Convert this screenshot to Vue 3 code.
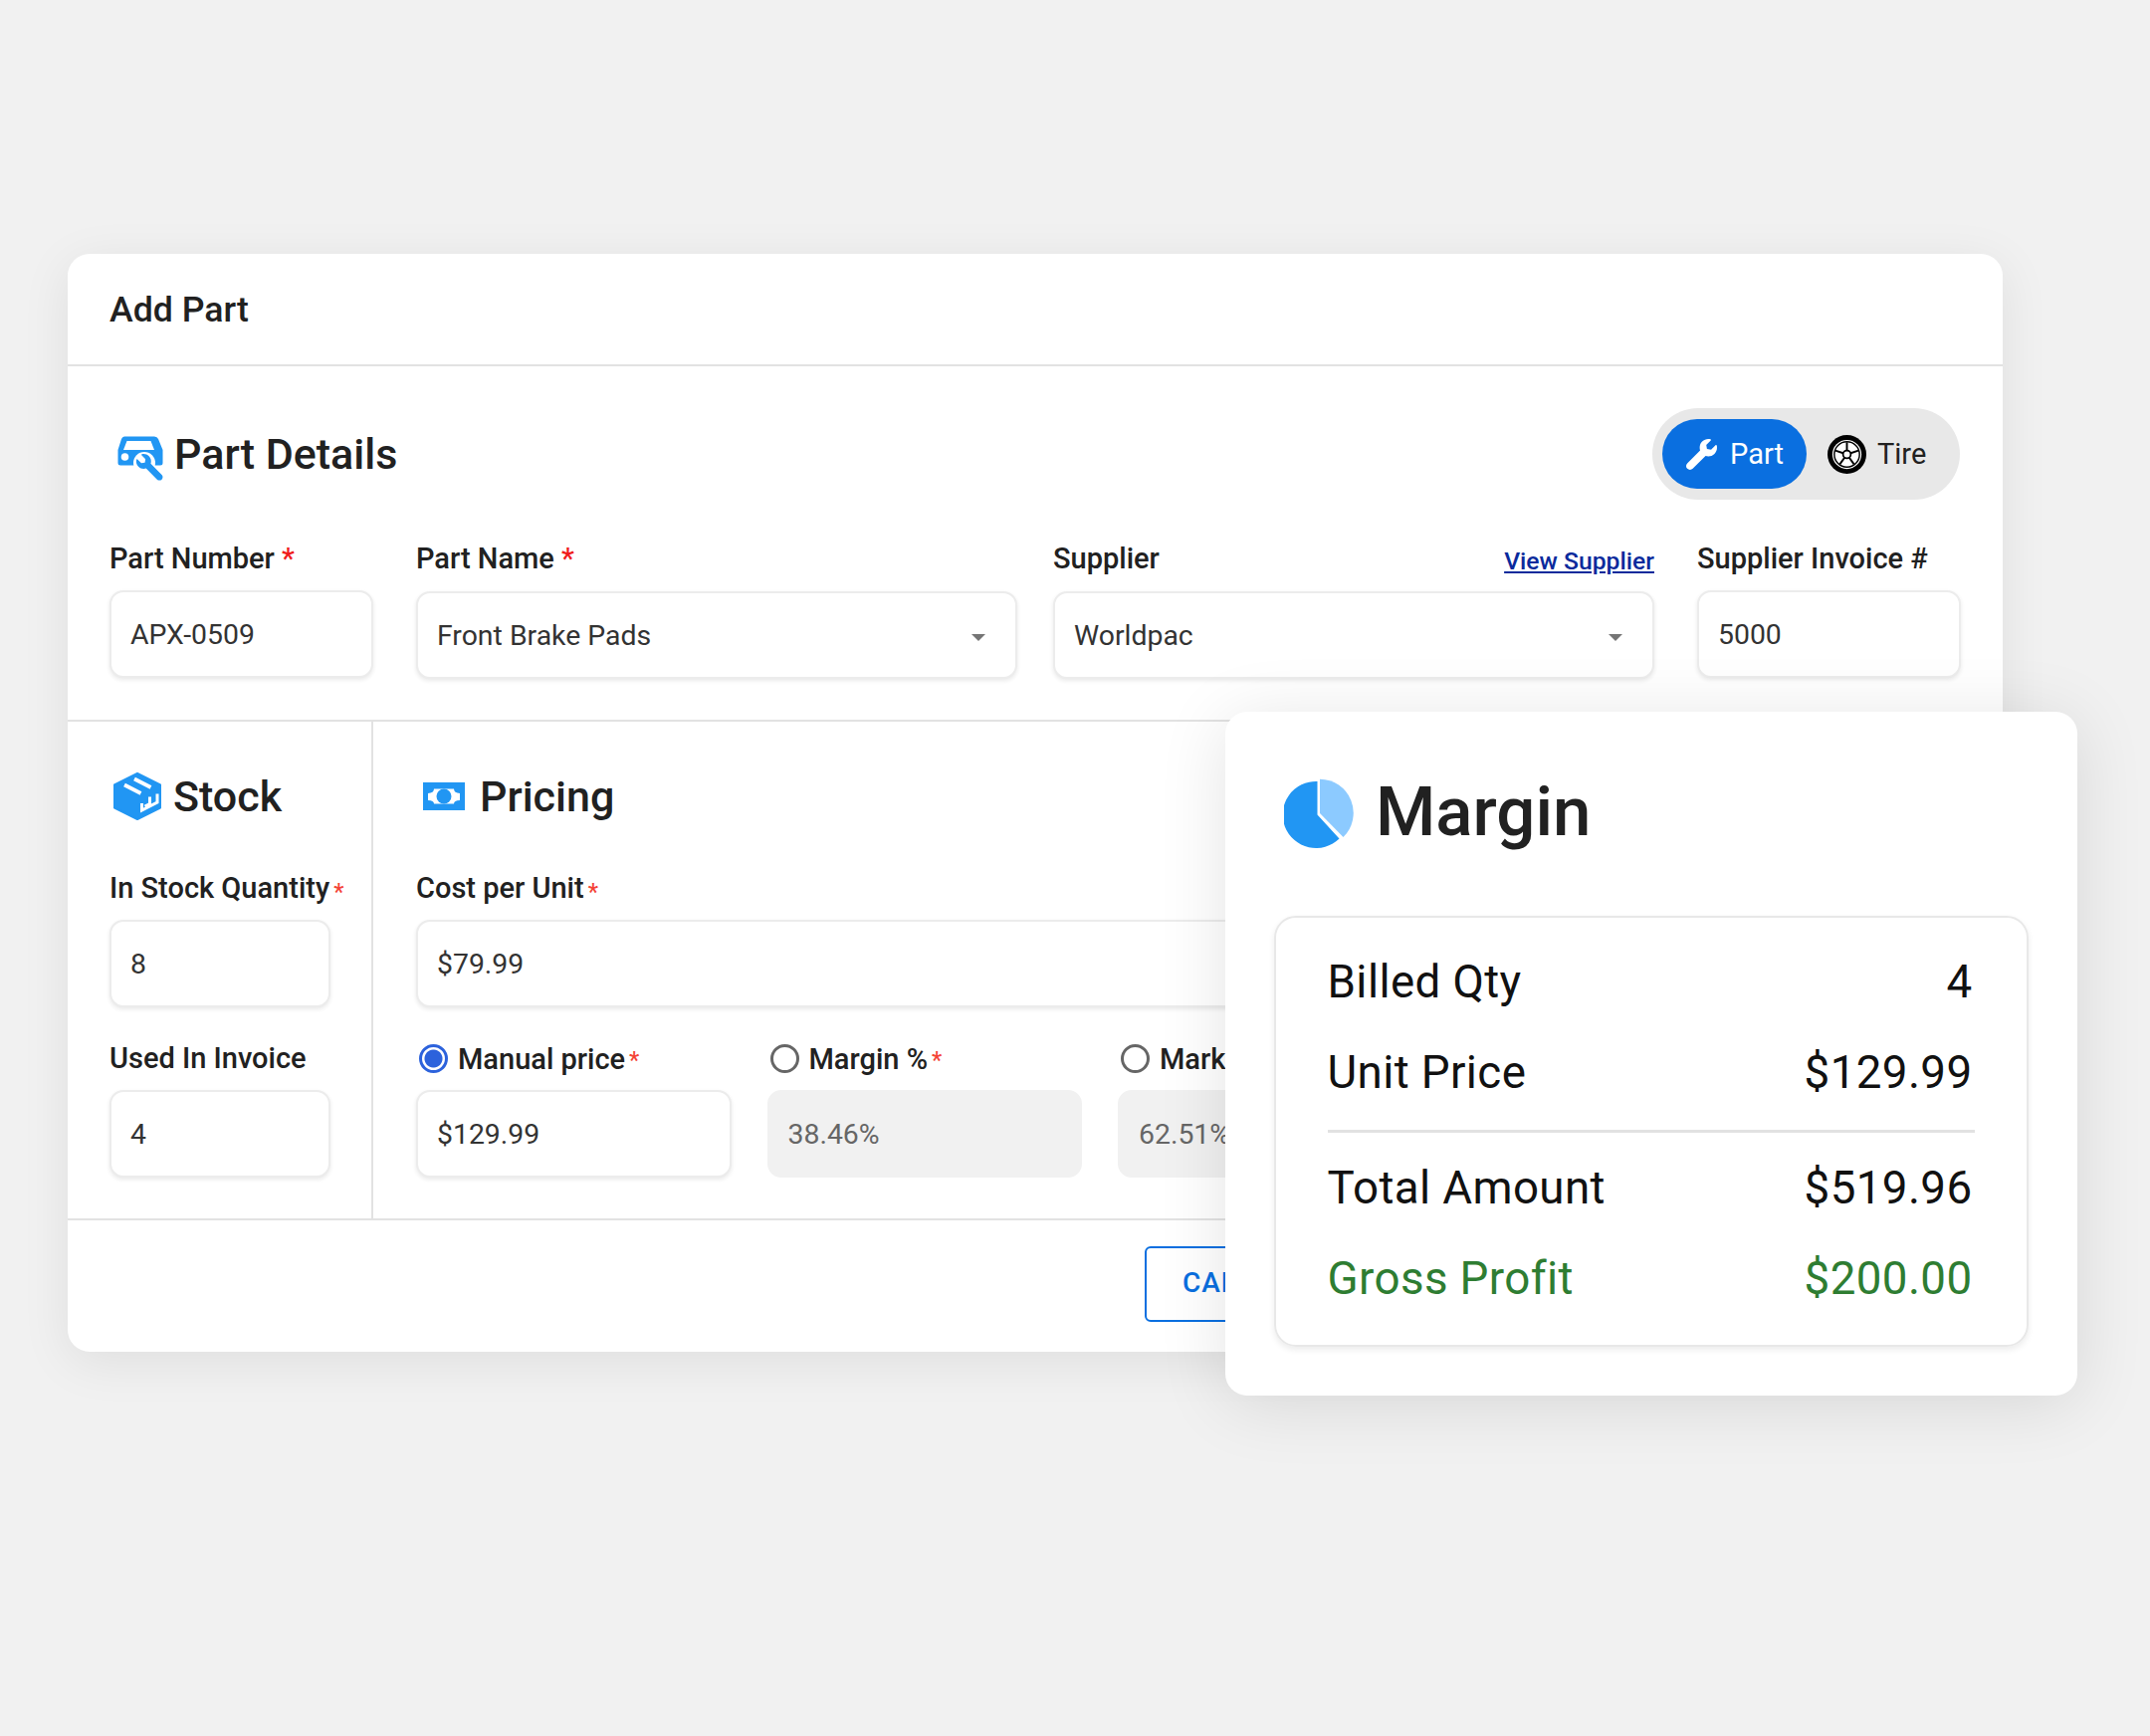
<script setup>
const rows = [
  { label: 'Billed Qty', value: '4' },
  { label: 'Unit Price', value: '$129.99' },
]
const totals = [
  { label: 'Total Amount', value: '$519.96' },
  { label: 'Gross Profit', value: '$200.00', good: true },
]
const radios = [
  { label: 'Manual price', value: '$129.99', checked: true },
  { label: 'Margin %', value: '38.46%' },
  { label: 'Markup %', value: '62.51%' },
]
</script>

<template>
  <div class="stage">
    <section class="card">
      <header class="card-head">Add Part</header>

      <div class="details">
        <div class="details-top">
          <h2 class="heading">
            <svg class="ic-car" viewBox="0 0 48 45">
              <path fill="#2196f3" d="M8 .5H38Q41 .5 42 3L46.500 14V27Q46.500 29.500 44 29.500H4Q1.500 29.500 1.500 27V14L5 3Q6 .5 8 .5Z" />
              <path fill="#fff" d="M10.500 5H34.500L38 14H7Z" />
              <circle cx="8.500" cy="21" r="3.800" fill="#fff" />
              <circle cx="28" cy="27" r="11" fill="#fff" />
              <path fill="#2196f3" transform="translate(46.500 18) scale(-.052 .052)" d="M507.730 109.100c-2.240-9.030-13.540-12.090-20.120-5.510l-74.360 74.360-67.880-11.310-11.310-67.880 74.360-74.360c6.620-6.620 3.430-17.900-5.660-20.160-47.380-11.740-99.550.91-136.580 37.930-39.640 39.640-50.550 97.100-34.050 147.200L18.740 402.760c-24.990 24.990-24.990 65.510 0 90.500 24.990 24.990 65.510 24.990 90.500 0l213.210-213.210c50.120 16.710 107.470 5.680 147.370-34.220 37.070-37.070 49.700-89.320 37.910-136.730z" />
            </svg>
            Part Details
          </h2>
          <div class="toggle">
            <div class="toggle-on">
              <svg class="ic-wrench" viewBox="0 0 512 512">
                <path fill="#fff" d="M507.730 109.100c-2.240-9.030-13.540-12.090-20.120-5.510l-74.360 74.360-67.880-11.310-11.310-67.880 74.360-74.360c6.620-6.620 3.430-17.900-5.660-20.160-47.380-11.740-99.550.91-136.580 37.930-39.640 39.640-50.550 97.100-34.050 147.200L18.740 402.760c-24.990 24.990-24.990 65.510 0 90.500 24.990 24.990 65.510 24.990 90.500 0l213.210-213.210c50.120 16.710 107.470 5.680 147.370-34.220 37.070-37.070 49.700-89.320 37.910-136.730z" />
              </svg>
              Part
            </div>
            <div class="toggle-off">
              <svg class="ic-tire" viewBox="0 0 40 40">
                <circle cx="20" cy="20" r="20" fill="#000" />
                <circle cx="20" cy="20" r="15" fill="#fff" />
                <circle cx="20" cy="20" r="13" fill="none" stroke="#000" stroke-width="1.500" />
                <g stroke="#000" stroke-width="2">
                  <path d="M20 20V7.500" />
                  <path d="M20 20L31.900 16.100" />
                  <path d="M20 20L27.300 30.100" />
                  <path d="M20 20L12.700 30.100" />
                  <path d="M20 20L8.100 16.100" />
                </g>
                <circle cx="20" cy="20" r="4" fill="#fff" stroke="#000" stroke-width="1.800" />
              </svg>
              Tire
            </div>
          </div>
        </div>

        <div class="details-row">
          <div class="field narrow">
            <label class="label">Part Number <em class="req">*</em></label>
            <div class="input">APX-0509</div>
          </div>
          <div class="pair">
            <div class="field wide">
              <label class="label">Part Name <em class="req">*</em></label>
              <div class="input select">Front Brake Pads<i class="caret"></i></div>
            </div>
            <div class="field wide">
              <div class="label label-split"><span>Supplier</span><a class="link">View Supplier</a></div>
              <div class="input select">Worldpac<i class="caret"></i></div>
            </div>
          </div>
          <div class="field narrow">
            <label class="label">Supplier Invoice #</label>
            <div class="input">5000</div>
          </div>
        </div>
      </div>

      <div class="split">
        <div class="stock">
          <h2 class="heading sub">
            <svg class="ic-box" viewBox="0 0 48 48">
              <path fill="#2196f3" stroke="#2196f3" stroke-width="2" stroke-linejoin="round" d="M24 1L47 12.500V35.500L24 47L1 35.500V12.500Z" />
              <path fill="none" stroke="#fff" stroke-width="3.800" d="M11 12.500L27.500 21M21 6.500L37.500 15" />
              <path fill="none" stroke="#fff" stroke-width="3" d="M28.500 31V38L44 30V21.500M36.500 24.500V31.500L31.500 34" />
            </svg>
            Stock
          </h2>
          <div class="field">
            <label class="label">In Stock Quantity<em class="req small">*</em></label>
            <div class="input">8</div>
          </div>
          <div class="field next">
            <label class="label">Used In Invoice</label>
            <div class="input">4</div>
          </div>
        </div>

        <div class="pricing">
          <h2 class="heading sub">
            <svg class="ic-bill" viewBox="0 0 42 28">
              <rect width="42" height="28" fill="#2196f3" />
              <path fill="#fff" d="M11 6.500H31Q31 10.500 37 11V18Q31 18 31 21.500H11Q11 18 5 18V11Q11 10.500 11 6.500Z" />
              <circle cx="21" cy="14" r="7.500" fill="#2196f3" />
            </svg>
            Pricing
          </h2>
          <div class="field">
            <label class="label">Cost per Unit<em class="req small">*</em></label>
            <div class="input">$79.99</div>
          </div>
          <div class="radio-row next">
            <div v-for="r in radios" :key="r.label" class="field radio-field">
              <div class="radio-label">
                <span class="radio" :class="{ checked: r.checked }"></span>
                <span>{{ r.label }}</span><em class="req small">*</em>
              </div>
              <div class="input" :class="{ off: !r.checked }">{{ r.value }}</div>
            </div>
          </div>
        </div>
      </div>

      <footer class="foot">
        <button class="btn">CANCEL</button>
      </footer>
    </section>

    <aside class="margin">
      <h2 class="margin-head">
        <svg class="ic-pie" viewBox="0 0 70 70">
          <path fill="#2196f3" d="M33.500 3V36.500L55.500 60.500A33.500 33.500 0 1 1 33.500 3Z" />
          <path fill="#8ccaff" d="M36 .7V35L59.500 59A34 34 0 0 0 36 .7Z" />
        </svg>
        <span class="margin-title">Margin</span>
      </h2>
      <div class="sheet">
        <div v-for="r in rows" :key="r.label" class="line">
          <span>{{ r.label }}</span><span>{{ r.value }}</span>
        </div>
        <hr class="rule" />
        <div v-for="r in totals" :key="r.label" class="line" :class="{ good: r.good }">
          <span>{{ r.label }}</span><span>{{ r.value }}</span>
        </div>
      </div>
    </aside>
  </div>
</template>

<style scoped>
.stage {
  position: relative;
  height: 1744px;
  width: 2160px;
  overflow: hidden;
  padding: 255px 0 0 68px;
  box-sizing: border-box;
  background: #f1f1f1;
  font-family: Roboto, "Liberation Sans", sans-serif;
  color: #212121;
}
.card {
  width: 1944px;
  height: 1103px;
  background: #fff;
  border-radius: 22px;
  box-shadow: 0 10px 50px rgba(0, 0, 0, 0.08);
  display: flex;
  flex-direction: column;
}
.card-head {
  height: 110px;
  box-sizing: content-box;
  padding: 1px 0 0 42px;
  display: flex;
  align-items: center;
  font-size: 35.700px;
  font-weight: 500;
  border-bottom: 2px solid #e2e2e2;
}
.details {
  padding: 42px 42px 41px;
}
.details-top {
  display: flex;
  justify-content: space-between;
  align-items: center;
  height: 92px;
  margin-bottom: 38px;
  padding-right: 1px;
}
.heading {
  margin: 0;
  height: 60px;
  display: flex;
  align-items: center;
  gap: 10px;
  font-size: 43px;
  font-weight: 500;
  line-height: 1;
}
.heading.sub {
  margin-bottom: 41px;
  gap: 12px;
  padding-left: 4px;
}
.ic-car { width: 48px; height: 45px; margin: 8px 0 0 7px; flex: none; }
.ic-box { width: 48px; height: 48px; flex: none; }
.ic-bill { width: 42px; height: 28px; margin: 0 3px 0 3px; flex: none; }
.ic-pie { width: 70px; height: 70px; margin-left: 10px; flex: none; }
.ic-wrench { width: 31px; height: 31px; flex: none; }
.ic-tire { width: 39px; height: 39px; flex: none; }

.toggle {
  width: 309px;
  height: 92px;
  box-sizing: border-box;
  border-radius: 46px;
  background: #e8e8e8;
  padding: 11px 10px;
  display: flex;
  align-items: center;
  font-size: 29px;
}
.toggle-on {
  width: 145px;
  height: 70px;
  border-radius: 35px;
  background: #0a6fe0;
  color: #fff;
  display: flex;
  align-items: center;
  gap: 13px;
  padding-left: 24px;
  box-sizing: border-box;
}
.toggle-off {
  display: flex;
  align-items: center;
  gap: 11px;
  margin-left: 21px;
  color: #212121;
}

.details-row {
  display: flex;
  gap: 43px;
  align-items: flex-start;
}
.pair {
  display: flex;
  gap: 36px;
}
.pair .label { margin-bottom: 12px; }
.field.narrow { width: 265px; }
.field.wide { width: 604px; }
.label {
  display: block;
  height: 42px;
  line-height: 42px;
  margin-bottom: 11px;
  font-size: 29px;
  font-weight: 500;
  white-space: nowrap;
}
.label-split {
  display: flex;
  justify-content: space-between;
  align-items: center;
}
.link {
  font-size: 24.700px;
  color: #0a2a9c;
  text-decoration: underline;
  padding-top: 5px;
}
.req {
  font-style: normal;
  color: #f01c1c;
}
.req.small {
  font-size: 23px;
  color: #f44336;
  margin-left: 4px;
  position: relative;
  top: 2px;
}
.input {
  height: 88px;
  box-sizing: border-box;
  border: 2px solid #ececec;
  border-radius: 14px;
  background: #fff;
  box-shadow: 0 2px 4px rgba(0, 0, 0, 0.09);
  padding: 0 19px;
  display: flex;
  align-items: center;
  font-size: 28.400px;
  color: #333;
}
.input.off {
  background: #f1f1f1;
  border-color: #f1f1f1;
  box-shadow: none;
  color: #666;
}
.select {
  position: relative;
}
.caret {
  position: absolute;
  right: 30px;
  top: 41px;
  width: 0;
  height: 0;
  border-left: 7px solid transparent;
  border-right: 7px solid transparent;
  border-top: 7px solid #757575;
}

.split {
  display: flex;
  height: 499px;
  border-top: 2px solid #e2e2e2;
  border-bottom: 2px solid #e2e2e2;
}
.stock {
  width: 307px;
  box-sizing: border-box;
  flex: none;
  padding: 45px 41px 0 42px;
  border-right: 2px solid #e2e2e2;
}
.stock .label,
.pricing .label { margin-bottom: 11px; }
.next { margin-top: 30px; }
.pricing {
  flex: 1;
  min-width: 0;
  padding: 45px 43px 0;
}
.radio-row {
  display: flex;
  gap: 36px;
}
.radio-field { width: 316.500px; flex: none; }
.radio-label {
  height: 43px;
  margin-bottom: 10px;
  display: flex;
  align-items: center;
  font-size: 29px;
  font-weight: 500;
  white-space: nowrap;
}
.radio {
  width: 29px;
  height: 29px;
  box-sizing: border-box;
  border: 3px solid #666;
  border-radius: 50%;
  margin: 0 10px 0 3px;
  flex: none;
  background: #fff;
}
.radio.checked {
  border-color: #2c62dc;
  background: radial-gradient(circle, #2c62dc 0 8.500px, #fff 9.500px);
}

.foot {
  flex: 1;
  padding: 26px 0 0 1082px;
  display: flex;
  align-items: flex-start;
}
.btn {
  height: 76px;
  padding: 0 36px 3px;
  box-sizing: border-box;
  background: #fff;
  border: 2px solid #0a6fe0;
  border-radius: 6px;
  color: #0a6fe0;
  font-family: inherit;
  font-size: 28px;
  font-weight: 500;
  letter-spacing: 1px;
}

.margin {
  position: absolute;
  left: 1231px;
  top: 715px;
  width: 856px;
  height: 687px;
  box-sizing: border-box;
  padding: 67px 49px 0;
  background: #fff;
  border-radius: 22px;
  box-shadow: 0 8px 70px rgba(0, 0, 0, 0.11);
}
.margin-head {
  margin: 0 0 68px;
  height: 70px;
  display: flex;
  align-items: center;
  gap: 22px;
  font-size: 69px;
  font-weight: 500;
  line-height: 1;
}
.margin-title { margin-bottom: 4px; }
.sheet {
  height: 433px;
  box-sizing: border-box;
  border: 2px solid #e8e8e8;
  border-radius: 22px;
  box-shadow: 0 3px 6px rgba(0, 0, 0, 0.08);
  padding: 19px 54.500px 0 51.500px;
  color: #111;
}
.line {
  height: 91px;
  display: flex;
  justify-content: space-between;
  align-items: center;
  font-size: 45.700px;
  letter-spacing: 0.4px;
}
.line.good { color: #2e7d32; }
.rule {
  margin: 12px -2px 9.500px 0;
  height: 3px;
  border: 0;
  background: #e2e2e2;
}
</style>

<style>
body { background: #f1f1f1; }
</style>
